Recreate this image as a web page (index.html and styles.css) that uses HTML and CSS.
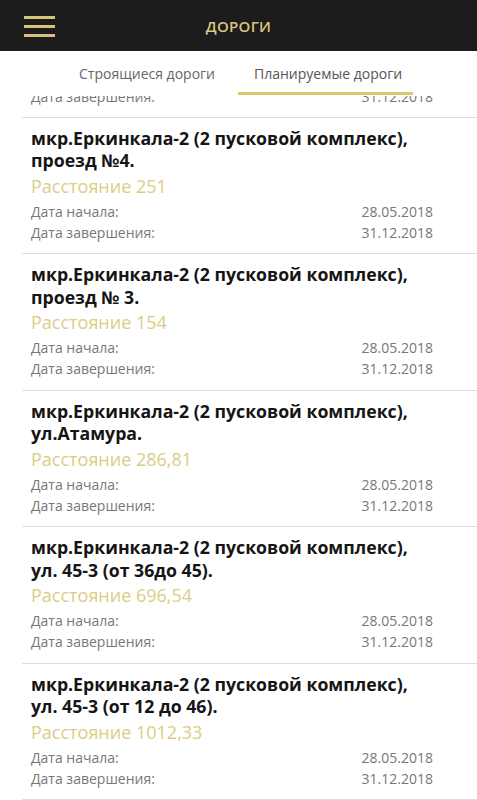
FILE: index.html
```html
<!DOCTYPE html>
<html lang="ru">
<head>
    <meta charset="UTF-8">
    <meta name="viewport" content="width=device-width, initial-scale=1.0">
    <title>Дороги</title>
    <link rel="stylesheet" href="styles.css">
</head>
<body>
    <div class="app">
        <div class="header">
            <div class="menu-btn">
                <span></span><span></span><span></span>
            </div>
            <h1>ДОРОГИ</h1>
        </div>

        <div class="tabs">
            <div class="tab">Строящиеся дороги</div>
            <div class="tab active">Планируемые дороги</div>
        </div>

        <div class="list">
            <div class="road road-cut">
                <div class="row"><span>Дата завершения:</span><span>31.12.2018</span></div>
            </div>

            <div class="road">
                <div class="road-title">мкр.Еркинкала-2 (2 пусковой комплекс), проезд №4.</div>
                <div class="distance">Расстояние 251</div>
                <div class="row"><span>Дата начала:</span><span>28.05.2018</span></div>
                <div class="row"><span>Дата завершения:</span><span>31.12.2018</span></div>
            </div>

            <div class="road">
                <div class="road-title">мкр.Еркинкала-2 (2 пусковой комплекс), проезд № 3.</div>
                <div class="distance">Расстояние 154</div>
                <div class="row"><span>Дата начала:</span><span>28.05.2018</span></div>
                <div class="row"><span>Дата завершения:</span><span>31.12.2018</span></div>
            </div>

            <div class="road">
                <div class="road-title">мкр.Еркинкала-2 (2 пусковой комплекс), ул.Атамура.</div>
                <div class="distance">Расстояние 286,81</div>
                <div class="row"><span>Дата начала:</span><span>28.05.2018</span></div>
                <div class="row"><span>Дата завершения:</span><span>31.12.2018</span></div>
            </div>

            <div class="road">
                <div class="road-title">мкр.Еркинкала-2 (2 пусковой комплекс), ул. 45-3 (от 36до 45).</div>
                <div class="distance">Расстояние 696,54</div>
                <div class="row"><span>Дата начала:</span><span>28.05.2018</span></div>
                <div class="row"><span>Дата завершения:</span><span>31.12.2018</span></div>
            </div>

            <div class="road">
                <div class="road-title">мкр.Еркинкала-2 (2 пусковой комплекс), ул. 45-3 (от 12 до 46).</div>
                <div class="distance">Расстояние 1012,33</div>
                <div class="row"><span>Дата начала:</span><span>28.05.2018</span></div>
                <div class="row"><span>Дата завершения:</span><span>31.12.2018</span></div>
            </div>
        </div>
    </div>
</body>
</html>
```

FILE: styles.css
```css
* {
    margin: 0;
    padding: 0;
    box-sizing: border-box;
}
body {
    font-family: 'Open Sans', 'Noto Sans', sans-serif;
    background-color: #fff;
    color: #111;
}
.app {
    height: 800px;
    display: flex;
    flex-direction: column;
    overflow: hidden;
}
.header {
    height: 51px;
    background-color: #1c1c1c;
    display: flex;
    align-items: center;
    justify-content: center;
    position: relative;
    flex-shrink: 0;
}
.menu-btn {
    position: absolute;
    left: 24px;
    top: 16px;
    width: 31px;
    display: flex;
    flex-direction: column;
    gap: 6px;
}
.menu-btn span {
    display: block;
    height: 3px;
    background-color: #d6c27b;
}
h1 {
    font-size: 15px;
    font-weight: 600;
    color: #d9c67e;
    letter-spacing: 0.3px;
}
.tabs {
    height: 45px;
    display: flex;
    padding-left: 58px;
    background-color: #fff;
    flex-shrink: 0;
    position: relative;
    z-index: 1;
}
.tab {
    font-size: 14px;
    color: #666;
    white-space: nowrap;
    padding-top: 13px;
}
.tab:first-child {
    width: 180px;
    text-align: right;
    padding-right: 23px;
}
.tab.active {
    width: 175px;
    padding-left: 16px;
    color: #555;
    position: relative;
}
.tab.active::after {
    content: '';
    position: absolute;
    left: 0;
    right: 0;
    bottom: 1px;
    height: 3px;
    background-color: #d9c96a;
}
.list {
    flex: 1;
    overflow: hidden;
    margin-left: 22px;
}
.road {
    padding: 9px 44px 10.5px 9px;
    border-bottom: 1px solid #ddd;
}
.road-cut {
    margin-top: -10.5px;
    padding-top: 0;
    padding-bottom: 10px;
}
.road-title {
    font-size: 17.7px;
    font-weight: 700;
    line-height: 22.5px;
    color: #151515;
}
.distance {
    font-size: 18px;
    line-height: 29px;
    color: #dccc85;
}
.row {
    display: flex;
    justify-content: space-between;
    font-size: 14px;
    line-height: 21px;
    color: #777;
}
```
